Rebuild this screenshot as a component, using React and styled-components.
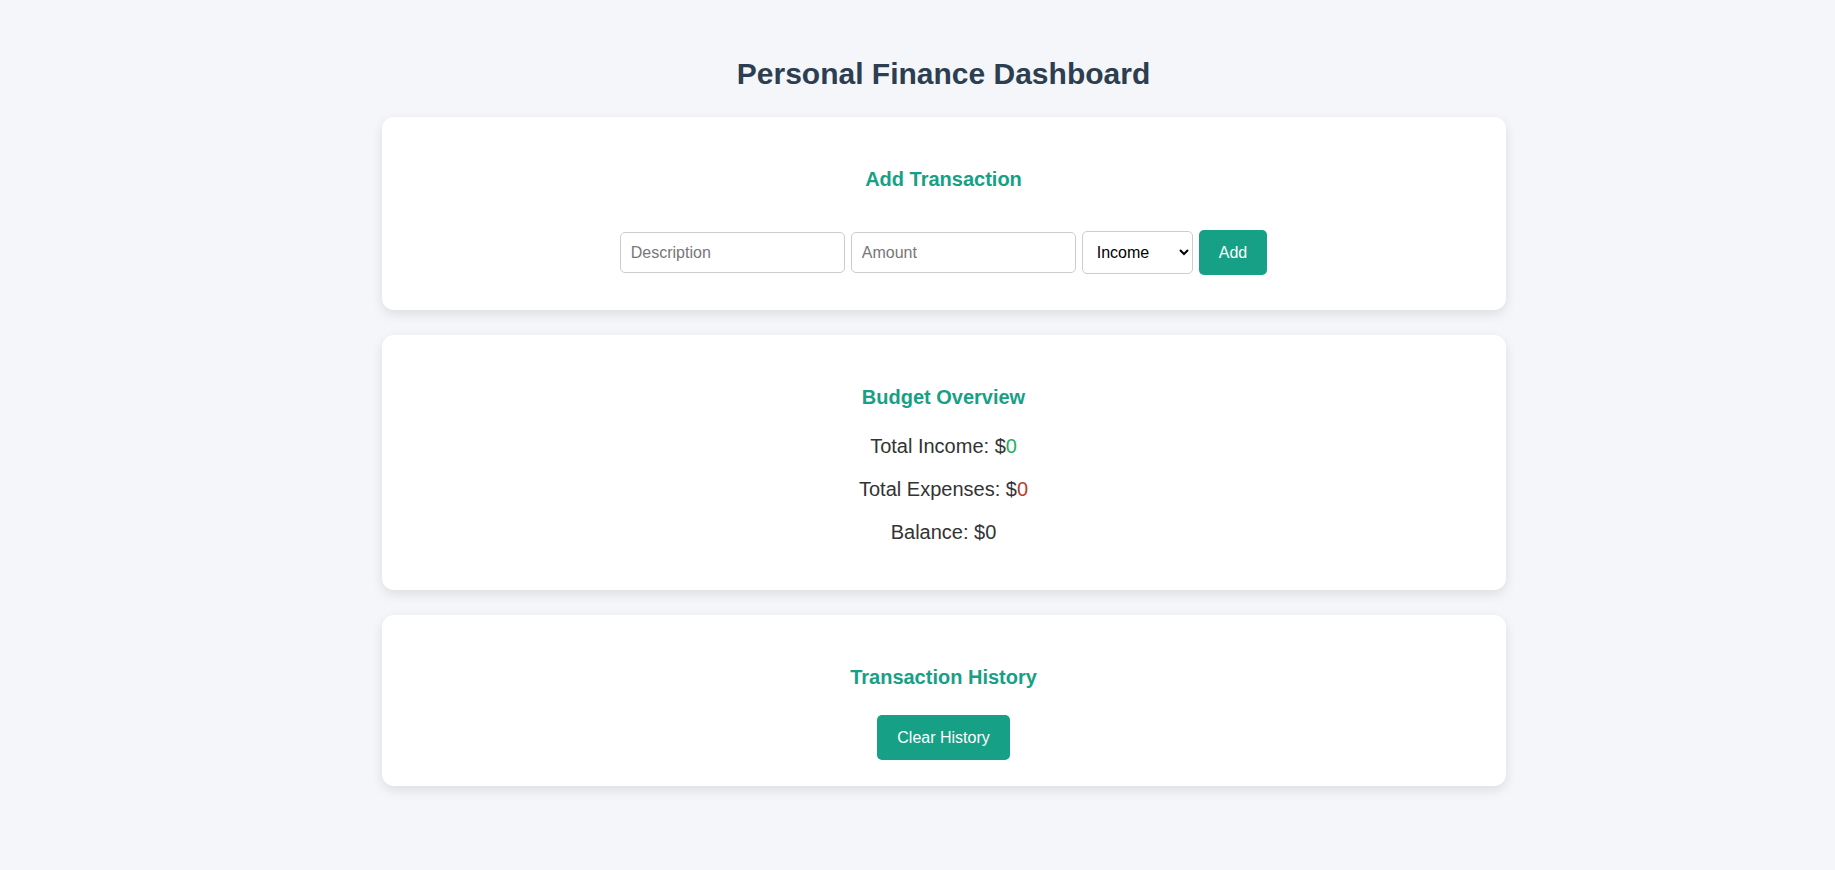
import React, { useState } from 'react'
import styled, { createGlobalStyle } from 'styled-components';

const GlobalStyle = createGlobalStyle`
  body {
    margin: 0;
    background: #f4f6f9;
    font-family: "Liberation Sans", Arial, sans-serif;
    color: #333;
  }
`;

function App() {
  const [type, setType] = useState('income')

  return (
    <Page>
      <GlobalStyle />
      <Container>
        <Title>Personal Finance Dashboard</Title>

        <Card>
          <SectionTitle>Add Transaction</SectionTitle>
          <Form onSubmit={(e) => e.preventDefault()}>
            <Input type="text" placeholder="Description" />
            <Input type="number" placeholder="Amount" />
            <Select value={type} onChange={(e) => setType(e.target.value)}>
              <option value="income">Income</option>
              <option value="expense">Expense</option>
            </Select>
            <Button type="submit">Add</Button>
          </Form>
        </Card>

        <Card $bottom="26px">
          <SectionTitle>Budget Overview</SectionTitle>
          <Stat>Total Income: $<Amount $tone="income">0</Amount></Stat>
          <Stat>Total Expenses: $<Amount $tone="expense">0</Amount></Stat>
          <Stat>Balance: $0</Stat>
        </Card>

        <Card $bottom="26px">
          <SectionTitle>Transaction History</SectionTitle>
          <Button type="button">Clear History</Button>
        </Card>
      </Container>
    </Page>
  )
}

const Page = styled.div`
    min-height: 870px;
    padding: 57px 0 40px 52px;
    box-sizing: border-box;
`;

const Container = styled.main`
    width: 1124px;
    margin: 0 auto;
    display: flex;
    flex-direction: column;
    gap: 25px;
`;

const Title = styled.h1`
    margin: 0 0 1px;
    text-align: center;
    font-size: 30px;
    font-weight: 700;
    color: #2c3e50;
`;

const Card = styled.section`
    background: #fff;
    border-radius: 12px;
    box-shadow: 0 4px 12px rgba(0, 0, 0, 0.1);
    padding: 25px 20px ${(p) => p.$bottom || '25px'};
    text-align: center;
`;

const SectionTitle = styled.h2`
    margin: 26px 0 26px;
    font-size: 20px;
    font-weight: 700;
    color: #16a085;
`;

const Form = styled.form`
    display: flex;
    justify-content: center;
    align-items: center;
    gap: 6px;
    padding: 13px 0 10px;
`;

const Input = styled.input`
    width: 225px;
    height: 41px;
    box-sizing: border-box;
    padding: 10px;
    border: 1px solid #ccc;
    border-radius: 5px;
    font-family: inherit;
    font-size: 16px;
    color: #333;
    background: #fff;

    &::placeholder {
        color: #777;
    }

    &::-webkit-outer-spin-button,
    &::-webkit-inner-spin-button {
        -webkit-appearance: none;
        margin: 0;
    }
`;

const Select = styled.select`
    width: 111px;
    height: 43px;
    box-sizing: border-box;
    padding: 0 8px 0 10px;
    border: 1px solid #ccc;
    border-radius: 5px;
    font-family: inherit;
    font-size: 16px;
    color: #000;
    background: #fff;
`;

const Button = styled.button`
    height: 45px;
    padding: 0 20px;
    border: none;
    border-radius: 5px;
    background: #16a085;
    color: #fff;
    font-family: inherit;
    font-size: 16px;
    cursor: pointer;
`;

const Stat = styled.p`
    margin: 0 0 20px;
    font-size: 20px;
    color: #333;
`;

const Amount = styled.span`
    color: ${(p) => (p.$tone === 'income' ? '#27ae60' : '#c0392b')};
`;

export default App
